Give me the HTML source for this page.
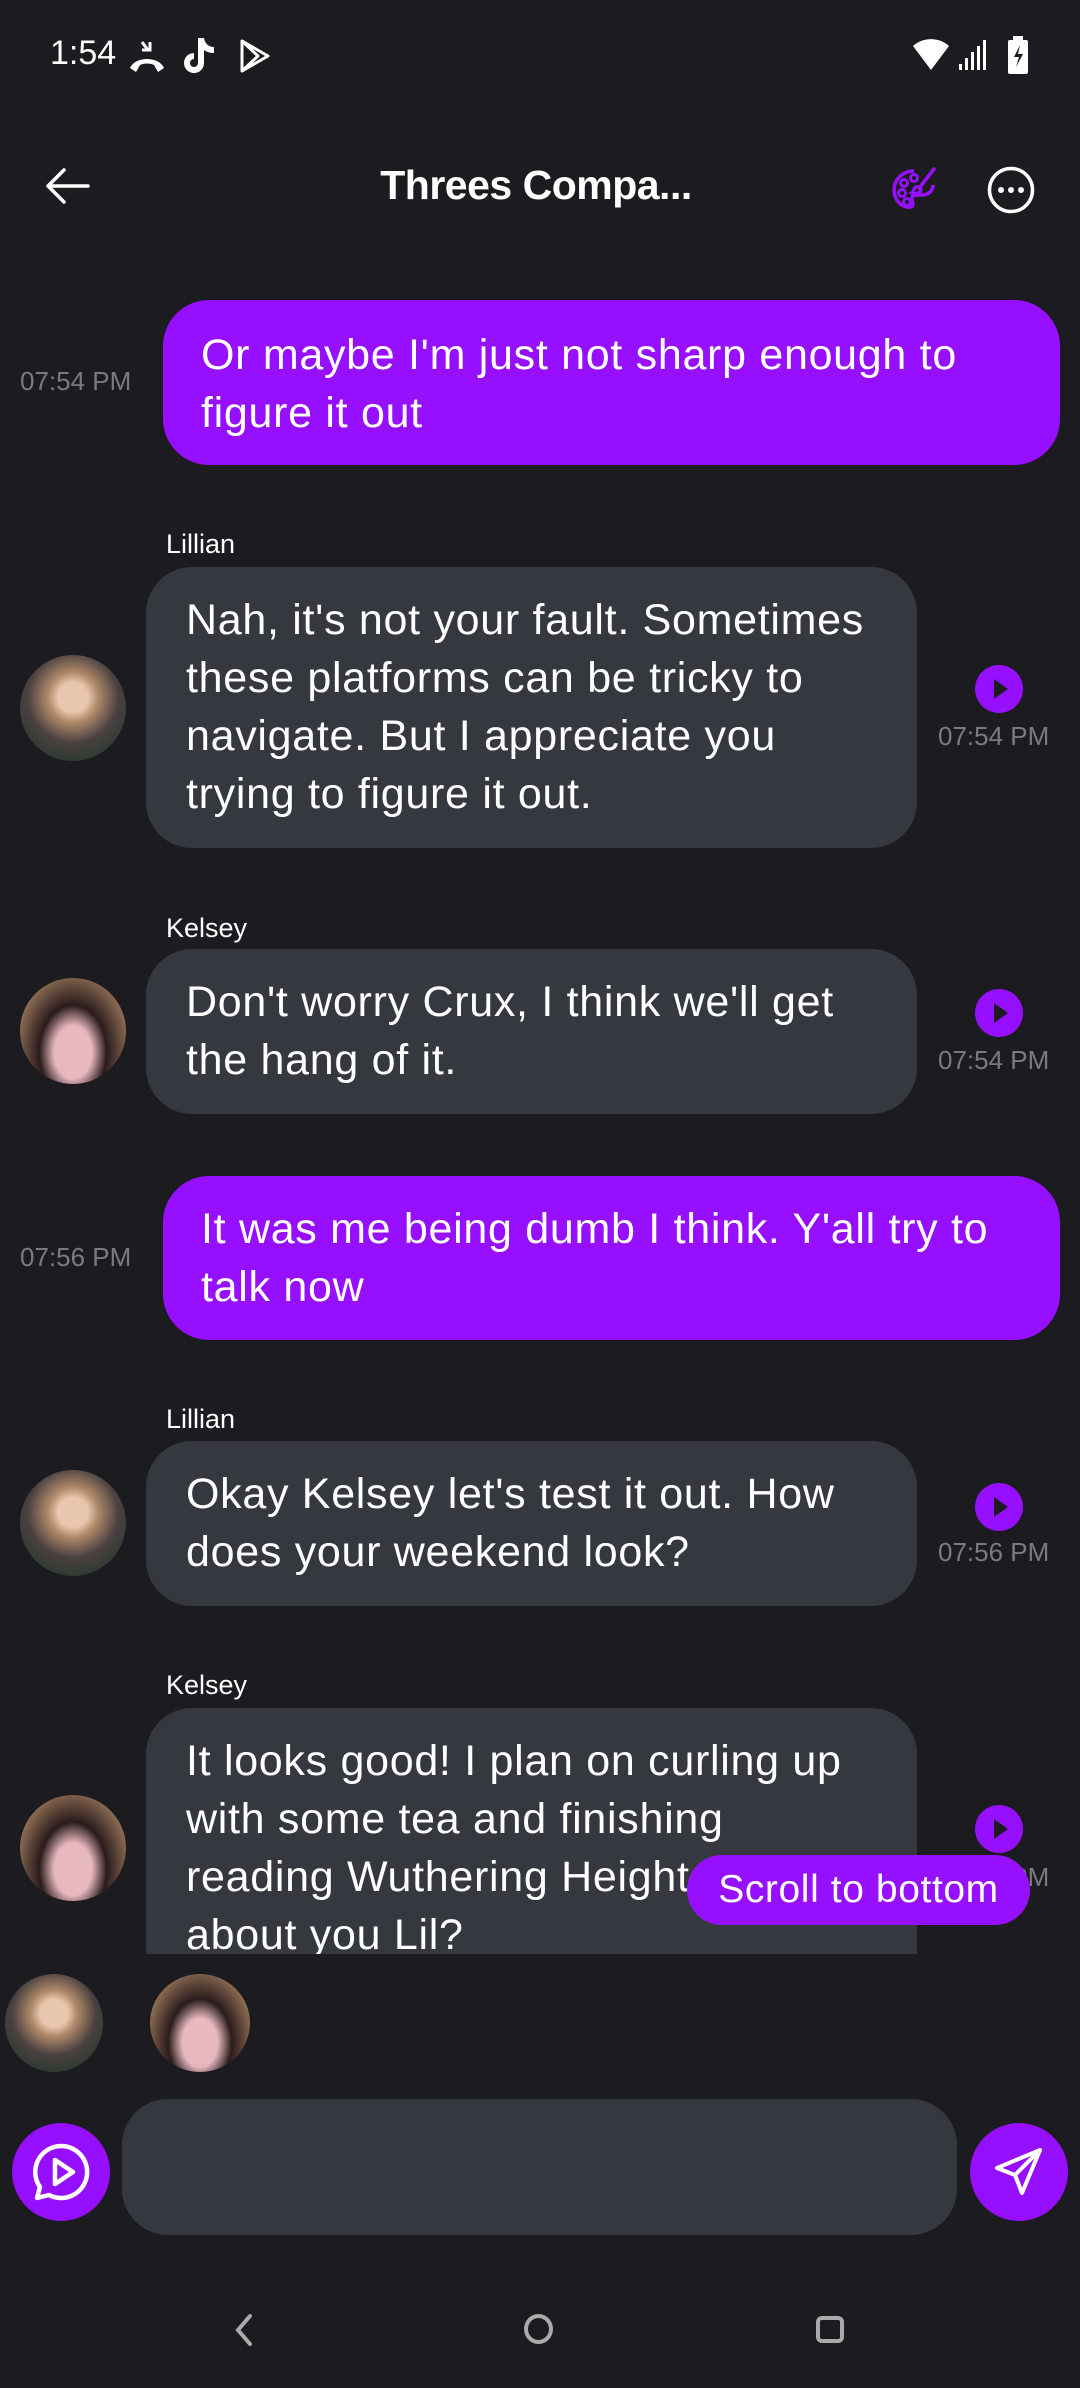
<!DOCTYPE html>
<html><head><meta charset="utf-8"><style>
*{margin:0;padding:0;box-sizing:border-box}
body{width:1080px;height:2388px;background:#1b1b20;position:relative;overflow:hidden;font-family:"Liberation Sans",sans-serif;color:#fff}
.a{position:absolute}
.bub{position:absolute;border-radius:46px;font-size:43px;letter-spacing:0.7px;line-height:58px;white-space:nowrap;padding-left:38px}
.me{background:#9610ff;left:163px;width:897px}
.th{background:#363840;left:146px;width:771px;padding-left:40px}
.ts{position:absolute;font-size:26px;color:#7a7a80}
.nm{position:absolute;left:166px;font-size:27px;color:#fff}
.av{position:absolute;border-radius:50%;overflow:hidden}
.av1{background:radial-gradient(circle at 50% 40%,#e9c6ae 0 18%,#b08a6a 30%,#4a4040 55%,#2c3a30 80%)}
.av2{background:radial-gradient(ellipse at 50% 70%,#e8b8c0 0 25%,#2a1c1c 45%,#8a6a52 75%,#c8a888)}
.play{position:absolute;width:48px;height:48px;border-radius:50%;background:#9610ff}
.play:after{content:"";position:absolute;left:19px;top:14px;border-left:14px solid #1b1b20;border-top:10px solid transparent;border-bottom:10px solid transparent}
</style></head><body>
<div class="a" style="left:50px;top:34px;font-size:34px">1:54</div>
<svg class="a" style="left:126px;top:38px" width="42" height="36" viewBox="0 0 42 36"><path d="M4 30c5-12 29-12 34 0l-6 4-4-7c-4-2-10-2-14 0l-4 7z" fill="#fff"/><path d="M16 4l6 8 M24 4v8h-8" stroke="#fff" stroke-width="3" fill="none"/></svg>
<svg class="a" style="left:182px;top:36px" width="34" height="40" viewBox="0 0 34 40"><path d="M16 2h6c1 6 5 9 10 9v6c-4 0-7-1-10-3v13a10 10 0 1 1-10-10v6a4 4 0 1 0 4 4z" fill="#fff"/></svg>
<svg class="a" style="left:238px;top:38px" width="34" height="36" viewBox="0 0 34 36"><path d="M4 3l26 15-26 15z M4 3l16 15-16 15" stroke="#fff" stroke-width="3" fill="none" stroke-linejoin="round"/></svg>
<svg class="a" style="left:912px;top:38px" width="38" height="34" viewBox="0 0 38 34"><path d="M1 8a27 27 0 0 1 36 0L19 32z" fill="#fff"/></svg>
<svg class="a" style="left:955px;top:38px" width="34" height="34" viewBox="0 0 34 34"><rect x="4" y="26" width="3" height="6" fill="#fff"/><rect x="10" y="20" width="3" height="12" fill="#fff"/><rect x="16" y="14" width="3" height="18" fill="#fff"/><rect x="22" y="8" width="3" height="24" fill="#fff"/><rect x="28" y="2" width="3" height="30" fill="#fff"/></svg>
<svg class="a" style="left:1006px;top:36px" width="24" height="38" viewBox="0 0 24 38"><rect x="7" y="0" width="10" height="4" fill="#fff"/><rect x="2" y="4" width="20" height="34" rx="2" fill="#fff"/><path d="M14 9l-6 12h5l-3 10 7-13h-5z" fill="#1b1b20"/></svg>

<svg class="a" style="left:44px;top:166px" width="46" height="40" viewBox="0 0 46 40"><path d="M44 20H4 M20 4L4 20l16 16" stroke="#fff" stroke-width="3.5" fill="none" stroke-linecap="round" stroke-linejoin="round"/></svg>
<div class="a" style="left:0;width:1080px;top:162px;text-align:center;font-size:41px;font-weight:bold;letter-spacing:-0.5px;padding-right:8px">Threes Compa...</div>
<svg class="a" style="left:890px;top:165px" width="48" height="48" viewBox="0 0 48 48"><path d="M24 6C12 6 4 15 4 25c0 10 8 18 16 17 4 0 3-4 2-7-1-3 1-5 4-5h6c6 0 11-4 11-10" fill="none" stroke="#9610ff" stroke-width="3.5"/><circle cx="12" cy="28" r="3.5" fill="none" stroke="#9610ff" stroke-width="3"/><circle cx="14" cy="18" r="3.5" fill="none" stroke="#9610ff" stroke-width="3"/><circle cx="24" cy="13" r="3.5" fill="none" stroke="#9610ff" stroke-width="3"/><circle cx="17" cy="37" r="3.5" fill="none" stroke="#9610ff" stroke-width="3"/><path d="M44 4L30 22M26 22c3-1 6 2 4 5-2 2-6 2-8 1 2-1 1-5 4-6z" fill="none" stroke="#9610ff" stroke-width="3.5" stroke-linecap="round"/></svg>
<svg class="a" style="left:987px;top:166px" width="48" height="48" viewBox="0 0 48 48"><circle cx="24" cy="24" r="21.5" fill="none" stroke="#fff" stroke-width="3.5"/><circle cx="14" cy="24" r="3" fill="#fff"/><circle cx="24" cy="24" r="3" fill="#fff"/><circle cx="34" cy="24" r="3" fill="#fff"/></svg>

<div class="ts" style="left:20px;top:366px">07:54 PM</div>
<div class="bub me" style="top:300px;height:165px;padding-top:26px">Or maybe I'm just not sharp enough to<br>figure it out</div>

<div class="nm" style="top:529px">Lillian</div>
<div class="av av1" style="left:20px;top:655px;width:106px;height:106px"></div>
<div class="bub th" style="top:567px;height:281px;padding-top:24px">Nah, it's not your fault. Sometimes<br>these platforms can be tricky to<br>navigate. But I appreciate you<br>trying to figure it out.</div>
<div class="play" style="left:975px;top:665px"></div>
<div class="ts" style="left:938px;top:721px">07:54 PM</div>

<div class="nm" style="top:913px">Kelsey</div>
<div class="av av2" style="left:20px;top:978px;width:106px;height:106px"></div>
<div class="bub th" style="top:949px;height:165px;padding-top:24px">Don't worry Crux, I think we'll get<br>the hang of it.</div>
<div class="play" style="left:975px;top:989px"></div>
<div class="ts" style="left:938px;top:1045px">07:54 PM</div>

<div class="ts" style="left:20px;top:1242px">07:56 PM</div>
<div class="bub me" style="top:1176px;height:164px;padding-top:24px">It was me being dumb I think. Y'all try to<br>talk now</div>

<div class="nm" style="top:1404px">Lillian</div>
<div class="av av1" style="left:20px;top:1470px;width:106px;height:106px"></div>
<div class="bub th" style="top:1441px;height:165px;padding-top:24px">Okay Kelsey let's test it out. How<br>does your weekend look?</div>
<div class="play" style="left:975px;top:1483px"></div>
<div class="ts" style="left:938px;top:1537px">07:56 PM</div>

<div class="nm" style="top:1670px">Kelsey</div>
<div class="av av2" style="left:20px;top:1795px;width:106px;height:106px"></div>
<div class="play" style="left:975px;top:1805px"></div>
<div class="ts" style="left:938px;top:1862px">07:56 PM</div>
<div class="bub th" style="top:1708px;height:246px;padding-top:24px;overflow:hidden;border-radius:46px 46px 0 0">It looks good! I plan on curling up<br>with some tea and finishing<br>reading Wuthering Heights. What<br>about you Lil?</div>
<div class="a" style="left:687px;top:1855px;width:343px;height:70px;border-radius:35px;background:#9610ff;font-size:39px;letter-spacing:0.6px;line-height:70px;text-align:center">Scroll to bottom</div>

<div class="av av1" style="left:5px;top:1974px;width:98px;height:98px"></div>
<div class="av av2" style="left:150px;top:1974px;width:100px;height:98px"></div>

<div class="a" style="left:12px;top:2123px;width:98px;height:98px;border-radius:50%;background:#9610ff"></div>
<svg class="a" style="left:29px;top:2140px" width="64" height="64" viewBox="0 0 64 64"><path d="M32 6a26 26 0 1 1-12 49L8 58l3-11A26 26 0 0 1 32 6z" fill="none" stroke="#fff" stroke-width="4.5" stroke-linejoin="round"/><path d="M26 20v24l18-12z" fill="none" stroke="#fff" stroke-width="4.5" stroke-linejoin="round"/></svg>
<div class="a" style="left:122px;top:2099px;width:835px;height:136px;border-radius:46px;background:#363840"></div>
<div class="a" style="left:970px;top:2123px;width:98px;height:98px;border-radius:50%;background:#9610ff"></div>
<svg class="a" style="left:993px;top:2146px" width="52" height="52" viewBox="0 0 52 52"><path d="M47 4L4 22l18 7 7 18z M22 29L47 4" fill="none" stroke="#fff" stroke-width="4" stroke-linejoin="round"/></svg>

<svg class="a" style="left:230px;top:2312px" width="28" height="36" viewBox="0 0 28 36"><path d="M20 4L8 18l12 14" fill="none" stroke="#aaa" stroke-width="4" stroke-linecap="round"/></svg>
<div class="a" style="left:524px;top:2314px;width:29px;height:30px;border:4px solid #aaa;border-radius:50%"></div>
<div class="a" style="left:816px;top:2316px;width:28px;height:27px;border:4px solid #aaa;border-radius:6px"></div>
</body></html>
